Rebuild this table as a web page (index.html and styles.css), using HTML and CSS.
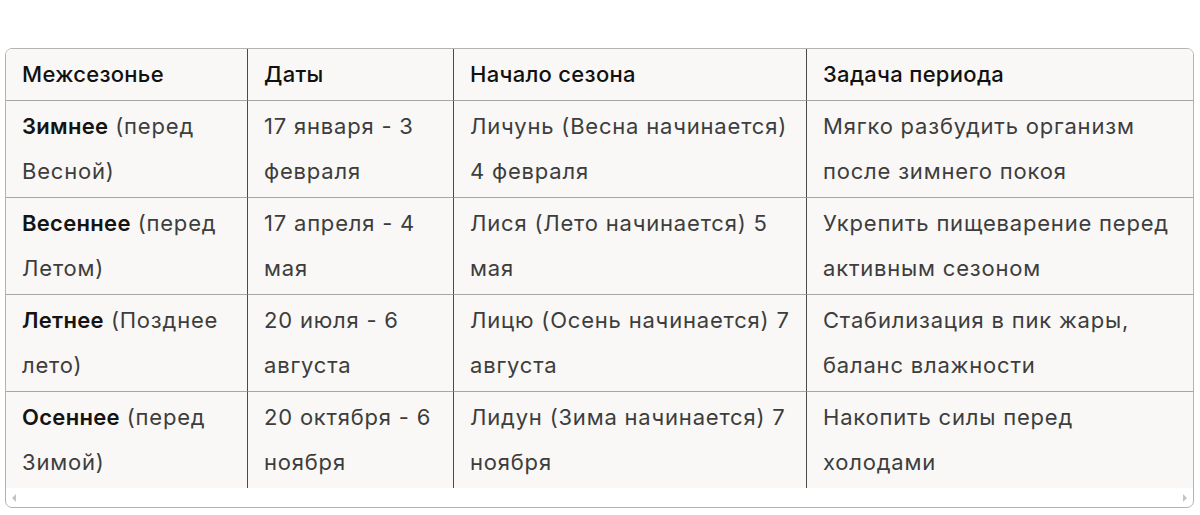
FILE: index.html
```html
<!DOCTYPE html>
<html lang="ru">
<head>
<meta charset="utf-8">
<title>Межсезонье</title>
<link rel="stylesheet" href="styles.css">
</head>
<body>
<div class="frame">
  <div class="scroller">
    <table class="grid">
      <colgroup>
        <col class="c1"><col class="c2"><col class="c3"><col class="c4">
      </colgroup>
      <thead>
        <tr><th>Межсезонье</th><th>Даты</th><th>Начало сезона</th><th>Задача периода</th></tr>
      </thead>
      <tbody>
        <tr>
          <td><strong>Зимнее</strong> (перед Весной)</td>
          <td>17 января - 3 февраля</td>
          <td>Личунь (Весна начинается) 4 февраля</td>
          <td>Мягко разбудить организм после зимнего покоя</td>
        </tr>
        <tr>
          <td><strong>Весеннее</strong> (перед Летом)</td>
          <td>17 апреля - 4 мая</td>
          <td>Лися (Лето начинается) 5 мая</td>
          <td>Укрепить пищеварение перед активным сезоном</td>
        </tr>
        <tr>
          <td><strong>Летнее</strong> (Позднее лето)</td>
          <td>20 июля - 6 августа</td>
          <td>Лицю (Осень начинается) 7 августа</td>
          <td>Стабилизация в пик жары, баланс влажности</td>
        </tr>
        <tr>
          <td><strong>Осеннее</strong> (перед Зимой)</td>
          <td>20 октября - 6 ноября</td>
          <td>Лидун (Зима начинается) 7 ноября</td>
          <td>Накопить силы перед холодами</td>
        </tr>
      </tbody>
    </table>
  </div>
  <div class="hbar">
    <span class="arrow left"></span>
    <span class="arrow right"></span>
  </div>
</div>
</body>
</html>
```
FILE: styles.css
```css
html, body {
  margin: 0;
  padding: 0;
  background: #ffffff;
}
body {
  padding: 48px 6px 0 5px;
  font-family: "Inter", "Noto Sans", sans-serif;
  font-size: 22px;
  letter-spacing: 0.8px;
  color: #3d3d3d;
}
.frame {
  border: 1px solid #b3b3b3;
  border-radius: 7px;
  overflow: hidden;
  background: #ffffff;
}
.scroller {
  background: #f9f8f6;
}
.grid {
  width: 100%;
  table-layout: fixed;
  border-collapse: separate;
  border-spacing: 0;
}
.c1 { width: 242px; }
.c2 { width: 206px; }
.c3 { width: 353px; }
.c4 { width: auto; }
.grid th,
.grid td {
  padding: 3px 15px 3px 16px;
  line-height: 45px;
  text-align: left;
  vertical-align: top;
  border-right: 1px solid #4a4a4a;
  border-bottom: 1px solid #a6a6a6;
}
.grid th:last-child,
.grid td:last-child {
  border-right: none;
}
.grid tbody tr:last-child td {
  border-bottom: none;
}
.grid th {
  font-weight: 500;
  letter-spacing: 0.3px;
  color: #111111;
}
.grid strong {
  font-weight: 600;
  letter-spacing: 0.3px;
  color: #141414;
}
.hbar {
  height: 19px;
  display: flex;
  align-items: center;
  justify-content: space-between;
  padding: 0 6px 0 6px;
}
.arrow {
  width: 0;
  height: 0;
  border-top: 4px solid transparent;
  border-bottom: 4px solid transparent;
}
.arrow.left {
  border-right: 4px solid #c4c4c4;
}
.arrow.right {
  border-left: 4px solid #c4c4c4;
}
```
